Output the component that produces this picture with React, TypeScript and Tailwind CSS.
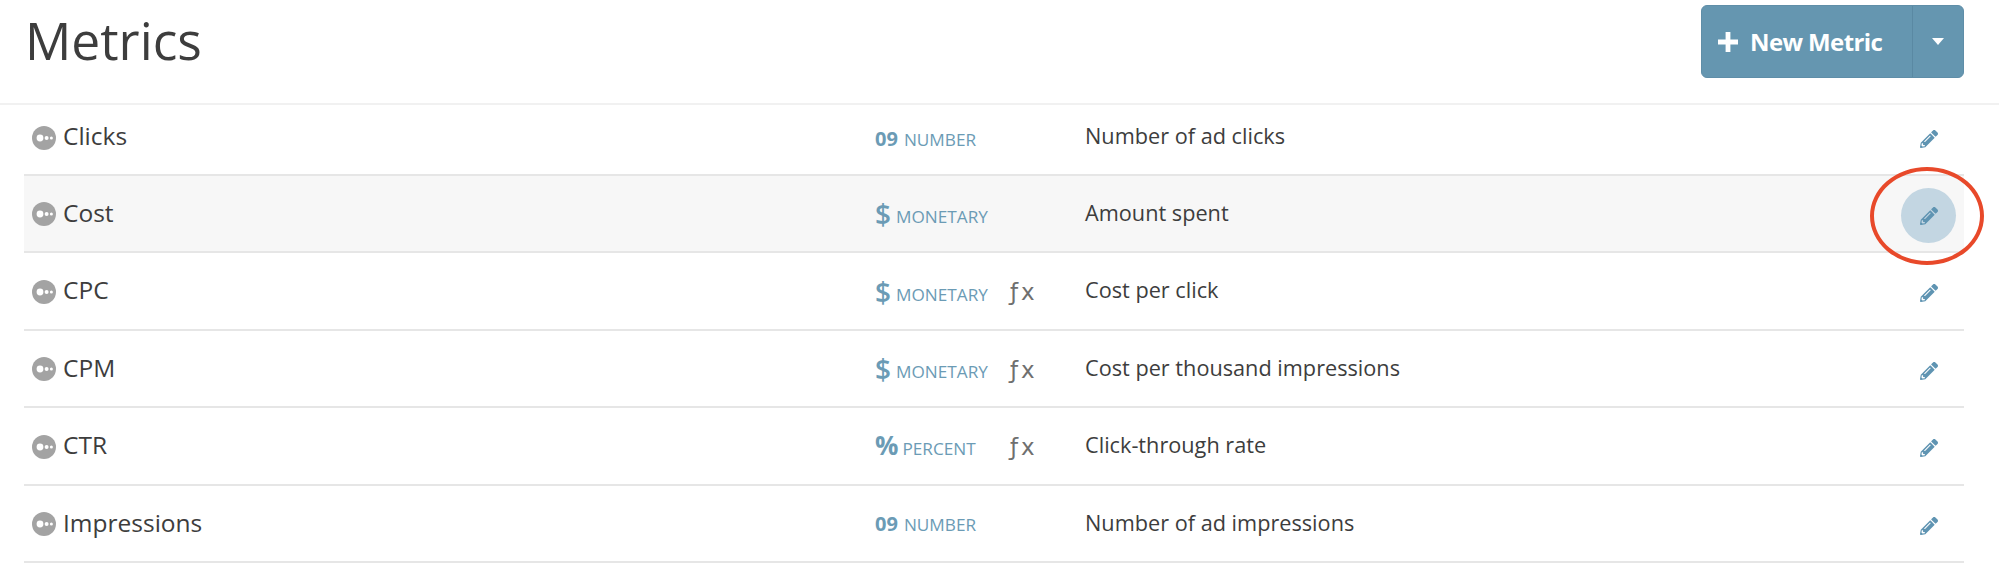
import { FaPencilAlt } from "react-icons/fa";

type Metric = {
  name: string;
  kind: "number" | "monetary" | "percent";
  fx?: boolean;
  description: string;
  hover?: boolean;
};

const metrics: Metric[] = [
  { name: "Clicks", kind: "number", description: "Number of ad clicks" },
  { name: "Cost", kind: "monetary", description: "Amount spent", hover: true },
  { name: "CPC", kind: "monetary", fx: true, description: "Cost per click" },
  { name: "CPM", kind: "monetary", fx: true, description: "Cost per thousand impressions" },
  { name: "CTR", kind: "percent", fx: true, description: "Click-through rate" },
  { name: "Impressions", kind: "number", description: "Number of ad impressions" },
];

function MetricIcon() {
  return (
    <svg viewBox="0 0 24 24" className="w-6 h-6 shrink-0 mt-[2px]">
      <circle cx="12" cy="12" r="12" fill="#a3a3a3" />
      <circle cx="8" cy="12" r="3.4" fill="#fff" />
      <circle cx="14.6" cy="12" r="2" fill="#fff" />
      <circle cx="19.4" cy="12" r="1.5" fill="#fff" />
    </svg>
  );
}

function KindLabel({ kind }: { kind: Metric["kind"] }) {
  if (kind === "number") {
    return (
      <span className="flex items-baseline gap-[6px] text-[#6b9bb5]">
        <span className="text-[20px] font-bold">09</span>
        <span className="text-[17.2px]">NUMBER</span>
      </span>
    );
  }
  if (kind === "monetary") {
    return (
      <span className="flex items-baseline gap-[5px] text-[#6b9bb5]">
        <span className="text-[28px] font-semibold leading-none translate-y-[2px]">$</span>
        <span className="text-[17.2px]">MONETARY</span>
      </span>
    );
  }
  return (
    <span className="flex items-baseline gap-[5px] text-[#6b9bb5]">
      <span className="text-[26px] font-bold leading-none tracking-[-1px]">%</span>
      <span className="text-[17.2px]">PERCENT</span>
    </span>
  );
}

export default function App() {
  return (
    <div className="w-[1999px] h-[571px] overflow-hidden bg-white text-[#3d3d3d] font-['Open_Sans',sans-serif]">
      <div className="h-[105px] border-b-2 border-[#f1f1f1] flex items-start justify-between pl-[25px] pr-[35px]">
        <h1 className="text-[51.5px] leading-[68px] mt-[6px]">Metrics</h1>
        <div className="mt-[5px] flex h-[73px] w-[263px] rounded-[6px] bg-[#6596b0] border border-[#5f8ea8] text-white">
          <div className="flex-1 flex items-center gap-[12px] pl-[16px] text-[24px] font-bold border-r border-[#5a89a3]">
            <svg viewBox="0 0 20 20" className="w-[20px] h-[20px]">
              <path d="M7.6 0h4.8v7.6H20v4.8h-7.6V20H7.6v-7.6H0V7.6h7.6z" fill="#fff" />
            </svg>
            <span className="tracking-[-0.6px]">New Metric</span>
          </div>
          <div className="w-[50px] flex items-center justify-center">
            <svg viewBox="0 0 12 7" className="w-3 h-[7px]">
              <path d="M0 0h12L6 7z" fill="#fff" />
            </svg>
          </div>
        </div>
      </div>

      <div className="ml-[24px] mr-[35px]">
        {metrics.map((m, i) => (
          <div
            key={m.name}
            className={`relative flex items-center border-b-2 border-[#e6e6e6] ${i === 0 ? "h-[70.5px] pb-[5px]" : "h-[77.5px]"} ${m.hover ? "bg-[#f7f7f7]" : ""}`}
          >
            <div className="w-[851px] flex items-center gap-[7px] pl-[8px] text-[24.5px]">
              <MetricIcon />
              <span>{m.name}</span>
            </div>
            <div className={`w-[135px] ${i === 0 ? "mt-[4px]" : "mt-[2px]"}`}>
              <KindLabel kind={m.kind} />
            </div>
            <div className="w-[75px] text-[#6f6f6f] text-[23px] mt-[2px]">
              {m.fx ? <span className="font-['DejaVu_Sans',sans-serif] tracking-[3px]">ƒx</span> : null}
            </div>
            <div className="flex-1 text-[21.7px]">{m.description}</div>
            <div className="w-[55px] h-[55px] mr-[8px] mt-[5px] flex items-center justify-center">
              <div
                className={`w-[55px] h-[55px] rounded-full flex items-center justify-center ${m.hover ? "bg-[#c3d6e2]" : ""}`}
              >
                <FaPencilAlt className="w-[18px] h-[18px] text-[#5f94b2]" />
              </div>
            </div>
            {m.hover ? (
              <div className="absolute left-[1846px] top-[-9px] w-[114px] h-[98px] rounded-[50%] border-[4px] border-[#e8492a]" />
            ) : null}
          </div>
        ))}
      </div>
    </div>
  );
}
